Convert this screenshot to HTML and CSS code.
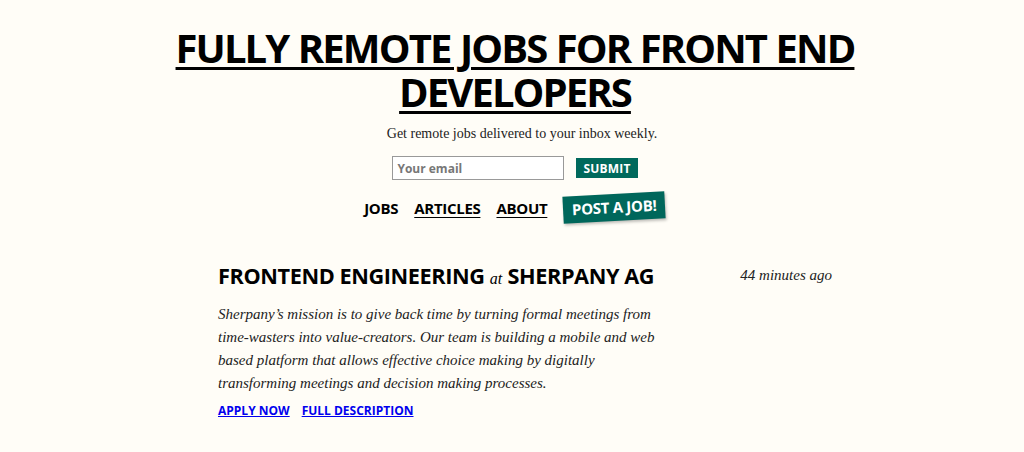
FILE: index.html
```html
<!DOCTYPE html>
<html lang="en">
<head>
<meta charset="utf-8">
<title>Fully Remote Jobs for Front End Developers</title>
<link rel="stylesheet" href="styles.css">
</head>
<body>
<header class="header">
  <h1 class="title"><a href="#">FULLY REMOTE JOBS FOR FRONT END DEVELOPERS</a></h1>
  <p class="tagline">Get remote jobs delivered to your inbox weekly.</p>
  <form class="signup">
    <input class="email" type="email" placeholder="Your email">
    <button class="submit" type="button">SUBMIT</button>
  </form>
  <nav class="nav">
    <a class="nav-link plain" href="#">JOBS</a>
    <a class="nav-link" href="#">ARTICLES</a>
    <a class="nav-link" href="#">ABOUT</a>
    <a class="post-job" href="#">POST A JOB!</a>
  </nav>
</header>
<main class="jobs">
  <article class="job">
    <div class="job-main">
      <h2 class="job-title">FRONTEND ENGINEERING <span class="at">at</span> SHERPANY AG</h2>
      <p class="job-desc">Sherpany’s mission is to give back time by turning formal meetings from time-wasters into value-creators. Our team is building a mobile and web based platform that allows effective choice making by digitally transforming meetings and decision making processes.</p>
      <div class="job-links">
        <a href="#">APPLY NOW</a>
        <a href="#">FULL DESCRIPTION</a>
      </div>
    </div>
    <div class="job-time">44 minutes ago</div>
  </article>
</main>
</body>
</html>
```
FILE: styles.css
```css
html, body {
  margin: 0;
  padding: 0;
  background: #fffdf7;
}
body {
  font-family: "Liberation Serif", Georgia, serif;
  color: #222;
}
.header {
  display: flex;
  flex-direction: column;
  align-items: center;
  padding-top: 26px;
  padding-left: 6px;
}
.title {
  margin: 0;
  width: 720px;
  text-align: center;
  font-family: "Open Sans", "Noto Sans", sans-serif;
  font-weight: 700;
  font-size: 40px;
  line-height: 44px;
  letter-spacing: -1.9px;
  word-spacing: 1px;
}
.title a {
  color: #000;
  text-decoration: underline;
  text-decoration-thickness: 3px;
  text-underline-offset: 4px;
}
.tagline {
  margin: 12px 0 0 14px;
  font-size: 14px;
  line-height: 16px;
  color: #222;
}
.signup {
  display: flex;
  align-items: center;
  gap: 12px;
  margin-top: 14px;
  margin-left: 0;
}
.email {
  box-sizing: border-box;
  width: 172px;
  height: 24px;
  border: 1px solid #999;
  background: #fff;
  padding: 0 4px;
  font-family: "Open Sans", sans-serif;
  font-weight: 700;
  font-size: 12px;
  color: #333;
}
.email::placeholder {
  color: #777;
}
.submit {
  height: 20px;
  padding: 0 7px;
  border: 0;
  background: #00695c;
  color: #fff;
  font-family: "Open Sans", sans-serif;
  font-weight: 700;
  font-size: 12px;
  letter-spacing: 0.2px;
}
.nav {
  display: flex;
  align-items: center;
  gap: 16px;
  margin-top: 14px;
}
.nav-link {
  font-family: "Open Sans", sans-serif;
  font-weight: 700;
  font-size: 15px;
  letter-spacing: -0.3px;
  color: #000;
  text-decoration: underline;
  text-underline-offset: 3px;
}
.nav-link.plain {
  text-decoration: none;
}
.post-job {
  display: inline-block;
  padding: 3px 9px 4px;
  background: #00675b;
  color: #fff;
  font-family: "Open Sans", sans-serif;
  font-weight: 700;
  font-size: 15px;
  letter-spacing: -0.3px;
  text-decoration: none;
  transform: rotate(-3deg);
  box-shadow: 1px 2px 3px rgba(0,0,0,0.25);
}
.jobs {
  width: 640px;
  margin: 40px auto 0;
  padding-left: 26px;
  box-sizing: border-box;
}
.job {
  display: flex;
  justify-content: space-between;
  align-items: flex-start;
}
.job-main {
  width: 450px;
}
.job-title {
  margin: 0;
  font-family: "Open Sans", sans-serif;
  font-weight: 700;
  font-size: 21.7px;
  line-height: 30px;
  letter-spacing: -0.4px;
  color: #000;
  white-space: nowrap;
}
.at {
  font-family: "Liberation Serif", Georgia, serif;
  font-style: italic;
  font-weight: 400;
  font-size: 16px;
  letter-spacing: 0;
}
.job-desc {
  margin: 9px 0 0;
  font-style: italic;
  font-size: 15px;
  line-height: 23px;
  color: #222;
}
.job-links {
  display: flex;
  gap: 12px;
  margin-top: 7px;
}
.job-links a {
  font-family: "Open Sans", sans-serif;
  font-weight: 700;
  font-size: 12px;
  color: #00e;
  text-decoration: underline;
}
.job-time {
  margin-top: 6px;
  font-style: italic;
  font-size: 15px;
  color: #222;
}
```
